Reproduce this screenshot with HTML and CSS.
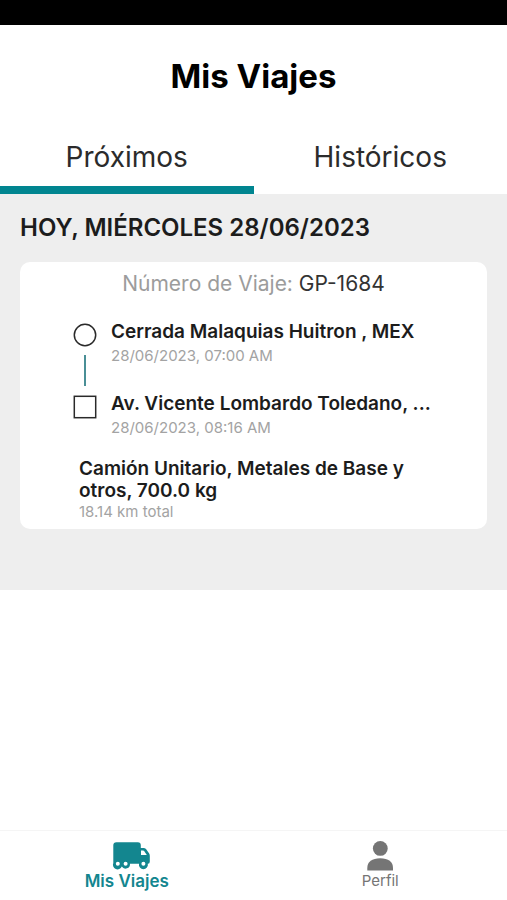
FILE: index.html
```html
<!DOCTYPE html>
<html lang="es">
<head>
<meta charset="utf-8">
<meta name="viewport" content="width=device-width, initial-scale=1">
<title>Mis Viajes</title>
<link rel="stylesheet" href="styles.css">
</head>
<body>
<div class="status-bar"></div>
<header class="header"><h1 class="title">Mis Viajes</h1></header>
<div class="tabs" role="tablist">
  <button class="tab tab-active" role="tab" aria-selected="true">Próximos</button>
  <button class="tab" role="tab" aria-selected="false">Históricos</button>
</div>
<main class="trips">
  <h2 class="day">HOY, MIÉRCOLES 28/06/2023</h2>
  <article class="card">
    <p class="trip-number">Número de Viaje: <span class="trip-code">GP-1684</span></p>
    <div class="stop">
      <div class="rail">
        <svg class="marker" viewBox="0 0 24 24"><circle cx="12" cy="12" r="10.7"/></svg>
        <span class="connector"></span>
      </div>
      <div class="stop-text">
        <h3 class="place">Cerrada Malaquias Huitron , MEX</h3>
        <p class="time">28/06/2023, 07:00 AM</p>
      </div>
    </div>
    <div class="stop">
      <div class="rail">
        <svg class="marker" viewBox="0 0 24 24"><rect x="1.3" y="1.3" width="21.4" height="21.4"/></svg>
      </div>
      <div class="stop-text">
        <h3 class="place">Av. Vicente Lombardo Toledano, ...</h3>
        <p class="time">28/06/2023, 08:16 AM</p>
      </div>
    </div>
    <div class="cargo">
      <h3 class="cargo-name">Camión Unitario, Metales de Base y otros, 700.0 kg</h3>
      <p class="distance">18.14 km total</p>
    </div>
  </article>
</main>
<nav class="nav">
  <a class="nav-item nav-active" href="#viajes">
    <svg class="nav-icon" viewBox="-9 0 46 30" fill="currentColor">
      <path fill-rule="evenodd" d="M3.5 1.2H24.8Q27.8 1.2 27.8 4.2V7H30.5Q32 7 33 8.1L36 12.3Q36.8 13.5 36.8 14.8V20.5Q36.8 22.7 35 22.7H34.8A4.5 4.5 0 1 1 26 22.7H17A4.5 4.5 0 0 1 8.8 25.6A4.5 4.5 0 0 1 .3 22V4.2Q.3 1.2 3.5 1.2ZM28 9.6V14H33.8L31.3 10.3Q30.8 9.6 30 9.6ZM4.8 20.7A2 2 0 1 0 4.8 24.7A2 2 0 1 0 4.8 20.7ZM12.6 20.7A2 2 0 1 0 12.6 24.7A2 2 0 1 0 12.6 20.7ZM30.4 20.7A2 2 0 1 0 30.4 24.7A2 2 0 1 0 30.4 20.7Z"/>
    </svg>
    <span>Mis Viajes</span>
  </a>
  <a class="nav-item" href="#perfil">
    <svg class="nav-icon" viewBox="-4 0 46 30" fill="currentColor">
      <circle cx="19.3" cy="7.4" r="7.4"/>
      <path d="M6.3 29.5V27.2C6.3 20.7 11 17.3 19.2 17.3S32 20.7 32 27.2V29.5Z"/>
    </svg>
    <span>Perfil</span>
  </a>
</nav>
</body>
</html>
```
FILE: styles.css
```css
* { box-sizing: border-box; margin: 0; padding: 0; }

body {
  display: flex;
  flex-direction: column;
  min-height: 100vh;
  background: #fff;
  color: #1c1c1c;
  font-family: Inter, "Liberation Sans", sans-serif;
}

.status-bar { height: 25px; background: #000; }

.header { padding: 31px 20px 29px; text-align: center; }
.title { color: #000; font-size: 33px; font-weight: 700; line-height: 40px; }

.tabs { display: grid; grid-template-columns: 1fr 1fr; }
.tab {
  padding: 13px 0 10px;
  border: 0;
  border-bottom: 8px solid transparent;
  background: none;
  color: #2b2b2b;
  font: 400 28px/38px Inter, "Liberation Sans", sans-serif;
}
.tab-active { border-bottom-color: #008590; }

.trips { padding: 16px 20px 61px; background: #eee; }
.day { font-size: 24px; font-weight: 600; line-height: 36px; }

.card {
  margin-top: 16px;
  padding: 8px 53px;
  border-radius: 10px;
  background: #fff;
}
.trip-number {
  margin-bottom: 20px;
  color: #9c9c9c;
  font-size: 21px;
  line-height: 28px;
  text-align: center;
}
.trip-code { color: #333; }

.stop { display: flex; gap: 14px; min-height: 72px; }
.stop:has(+ .cargo) { min-height: 68px; }
.rail { display: flex; flex-direction: column; align-items: center; gap: 8px; padding-top: 5px; }
.marker { width: 24px; height: 24px; fill: none; stroke: #2a2a2a; stroke-width: 1.5; }
.connector { width: 2px; height: 31px; background: #4a8f96; }
.stop-text { flex: 1; min-width: 0; }
.place { overflow: hidden; font-size: 19px; font-weight: 600; line-height: 28px; text-overflow: ellipsis; white-space: nowrap; }
.time, .distance { color: #a3a3a3; font-size: 15px; line-height: 20px; }

.cargo { padding: 0 6px; }
.cargo-name { font-size: 19px; font-weight: 600; line-height: 22px; }
.distance { line-height: 19px; }

.nav {
  display: grid;
  grid-template-columns: 1fr 1fr;
  margin-top: auto;
  padding: 10px 0 9px;
  border-top: 1px solid #f5f5f5;
}
.nav-item {
  display: flex;
  flex-direction: column;
  align-items: center;
  color: #757575;
  font-size: 15px;
  line-height: 20px;
  text-decoration: none;
}
.nav-icon { width: 46px; height: 30px; }
.nav-active { color: #13868f; font-size: 17px; font-weight: 600; }
```
